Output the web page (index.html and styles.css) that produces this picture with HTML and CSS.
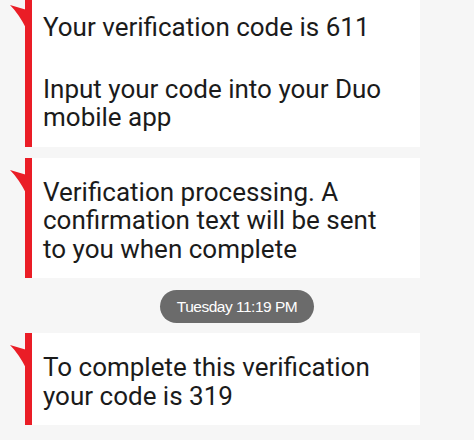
FILE: index.html
```html
<!DOCTYPE html>
<html lang="en">

<head>
    <meta charset="UTF-8">
    <meta name="viewport" content="width=device-width, initial-scale=1.0">
    <title>Messages</title>
    <link rel="stylesheet" href="styles.css">
</head>

<body>

    <!-- Conversa -->
    <div class="thread">

        <div class="bubble first">
            <svg class="tail" width="17" height="25" viewBox="0 0 17 25"><path d="M0 0 L17 5 L17 25 Q9 9 0 0 Z" /></svg>
            <p class="msg gap">Your verification code is 611</p>
            <p class="msg">Input your code into your Duo<br>mobile app</p>
        </div>

        <div class="bubble">
            <svg class="tail" width="17" height="25" viewBox="0 0 17 25"><path d="M0 0 L17 5 L17 25 Q9 9 0 0 Z" /></svg>
            <p class="msg">Verification processing. A<br>confirmation text will be sent<br>to you when complete</p>
        </div>

        <div class="stamp">Tuesday 11:19 PM</div>

        <div class="bubble">
            <svg class="tail" width="17" height="25" viewBox="0 0 17 25"><path d="M0 0 L17 5 L17 25 Q9 9 0 0 Z" /></svg>
            <p class="msg">To complete this verification<br>your code is 319</p>
        </div>

    </div>

</body>

</html>
```

FILE: styles.css
```css
body {
    margin: 0;
    padding: 0;
    background-color: #f6f6f6;
    font-family: Roboto, 'Noto Sans', sans-serif;
    color: #1b1b1b;
    overflow: hidden;
}

.thread {
    display: flex;
    flex-direction: column;
}

.bubble {
    position: relative;
    width: 377px;
    margin-left: 25px;
    margin-bottom: 10px;
    padding: 20px 0 15px 11px;
    background-color: #fff;
    border-left: 7px solid #ea1d26;
}

/* premiere bulle coupee en haut de l'ecran */
.bubble.first {
    margin-top: -7px;
    margin-bottom: 11px;
}

.tail {
    position: absolute;
    left: -22px;
    top: 12px;
    fill: #ea1d26;
}

.msg {
    margin: 0;
    font-size: 26px;
    line-height: 28.5px;
    white-space: nowrap;
}

.msg.gap {
    margin-bottom: 33px;
}

.stamp {
    align-self: center;
    height: 33px;
    line-height: 33px;
    padding: 0 17px;
    margin: 2px 0 10px;
    border-radius: 17px;
    background-color: #6b6b6b;
    color: #fff;
    font-family: 'Liberation Sans', Arial, sans-serif;
    font-size: 15.5px;
    letter-spacing: -0.5px;
}
```
